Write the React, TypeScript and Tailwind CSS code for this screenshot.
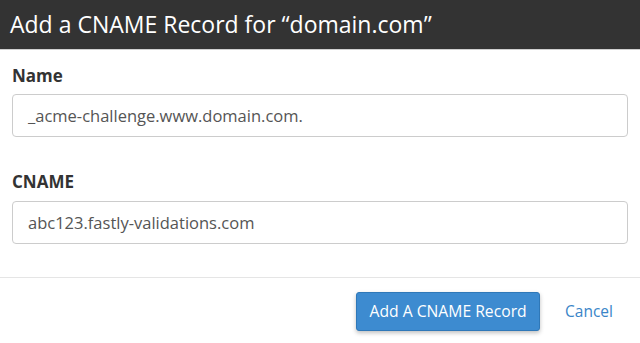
export default function App() {
  return (
    <div className="w-[640px] h-[343px] bg-white overflow-hidden font-['Open_Sans',sans-serif]">
      <div className="h-[50px] bg-[#333333] flex items-center px-[10px] border-b border-[#cfcfcf]">
        <h1 className="text-white text-[23px] leading-none">Add a CNAME Record for “domain.com”</h1>
      </div>
      <div className="px-[12px] pt-[15px]">
        <label className="block text-[17px] font-bold text-[#333333] leading-[22px]">Name</label>
        <div className="mt-[7px] h-[43px] border border-[#cccccc] rounded-[4px] flex items-center px-[15px] pt-[1px] text-[16.5px] text-[#555555]">
          _acme-challenge.www.domain.com.
        </div>
        <label className="block mt-[34px] text-[17px] font-bold text-[#333333] leading-[22px]">CNAME</label>
        <div className="mt-[8px] h-[43px] border border-[#cccccc] rounded-[4px] flex items-center px-[15px] pt-[1px] text-[16.5px] text-[#555555]">
          abc123.fastly-validations.com
        </div>
      </div>
      <div className="mt-[33px] border-t border-[#e5e5e5] flex items-start justify-end pt-[14px] pr-[27px] gap-[25px]">
        <button className="h-[39px] w-[184px] bg-[#3d8bd0] text-white text-[15.7px] rounded-[3px] border border-[#2f78b8] shadow-[0_2px_4px_rgba(0,0,0,0.25)]">
          Add A CNAME Record
        </button>
        <span className="h-[39px] flex items-center text-[15.5px] text-[#3a85c8]">Cancel</span>
      </div>
    </div>
  );
}
